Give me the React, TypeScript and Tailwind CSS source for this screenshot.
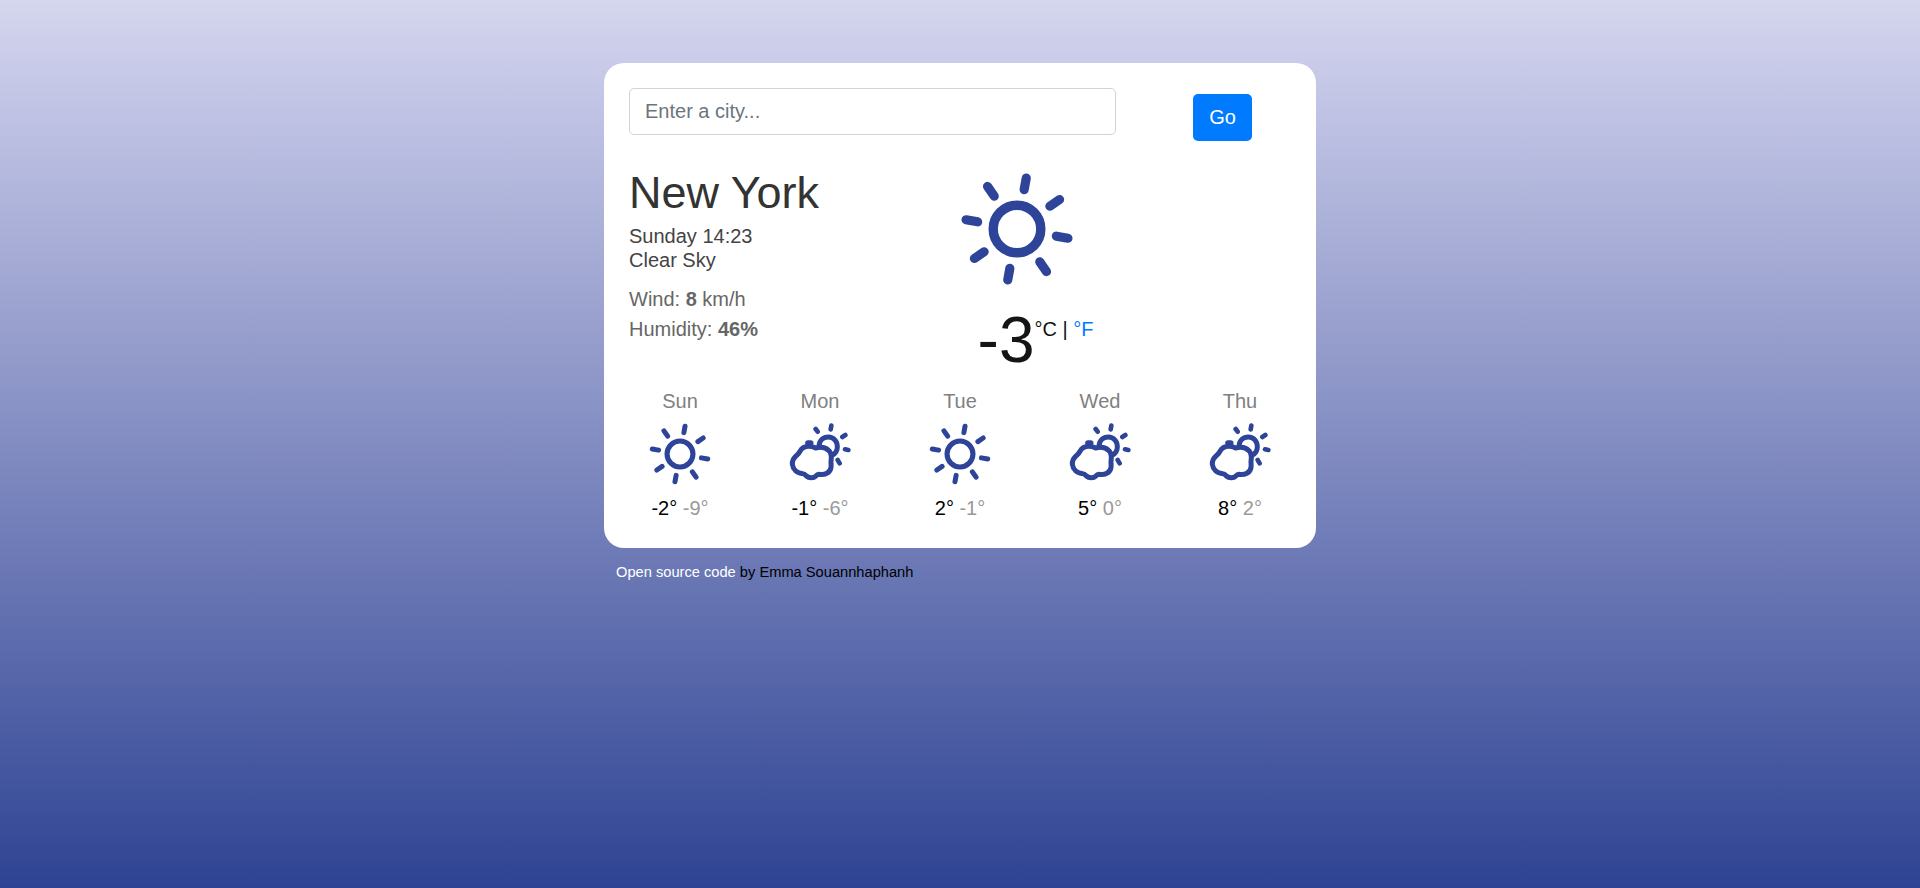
type Condition = "clear" | "partly";

type Day = { name: string; condition: Condition; high: number; low: number };

const forecast: Day[] = [
  { name: "Sun", condition: "clear", high: -2, low: -9 },
  { name: "Mon", condition: "partly", high: -1, low: -6 },
  { name: "Tue", condition: "clear", high: 2, low: -1 },
  { name: "Wed", condition: "partly", high: 5, low: 0 },
  { name: "Thu", condition: "partly", high: 8, low: 2 },
];

const rays = [10.3, 55.3, 100.3, 145.3, 190.3, 235.3, 280.3, 325.3];

function SunIcon({ className }: { className: string }) {
  return (
    <svg viewBox="-57 -57 114 114" className={className} fill="none" stroke="#2e4499" strokeLinecap="round">
      <circle r="23.8" strokeWidth="9.4" />
      {rays.map((angle) => (
        <path key={angle} d="M0 -40V-51.8" strokeWidth="9.2" transform={`rotate(${angle})`} />
      ))}
    </svg>
  );
}

function PartlyCloudyIcon({ className }: { className: string }) {
  return (
    <svg
      viewBox="27 24 186 186"
      className={className}
      fill="none"
      stroke="#2e4499"
      strokeWidth="15"
      strokeLinecap="round"
      strokeLinejoin="round"
    >
      <path d="M117 93C118 76 130 66 145 66C161 66 172 79 172 95C172 107 166 116 156 121" />
      <path d="M107 42L113 50M154 32L152 43M187 66L196 60M195 103L205 105M173 135L179 145" strokeWidth="14" />
      <path d="M84 84H92" strokeWidth="17" />
      <path d="M86 94C74 94 65 100 60 109C57 116 52 119 47 124C40 131 36 139 37 148C39 163 50 175 69 176C75 176 76 180 79 183C87 190 101 190 107 184C110 180 112 178 117 178C134 181 151 174 153 157C154 150 153 146 153 140C155 128 154 115 147 107C137 97 121 95 107 99C101 96 94 94 86 94Z" />
    </svg>
  );
}

export default function App() {
  return (
    <div className="min-h-screen bg-[linear-gradient(to_top,rgb(46,67,147)_0%,rgb(147,155,203)_60%,rgb(201,203,233)_93%,rgb(213,215,237)_100%)] pt-[63px] font-['Liberation_Sans',Arial,sans-serif] text-[20px] leading-[30px] text-black">
      <main className="mx-auto w-[712px]">
        <section className="h-[485px] rounded-[20px] bg-white p-[25px]">
          <form className="flex items-start" onSubmit={(e) => e.preventDefault()}>
            <input
              type="text"
              placeholder="Enter a city..."
              className="h-[47px] w-[487px] rounded-[5px] border border-[#ced4da] bg-white px-[15px] placeholder:text-[#6c757d] focus:outline-none"
            />
            <button
              type="submit"
              className="mt-[6px] ml-[77px] h-[47px] w-[59px] rounded-[5px] bg-[#007bff] pb-[2px] text-white"
            >
              Go
            </button>
          </form>

          <div className="mt-[21px] flex h-[209px]">
            <div className="w-[330.6px] pt-[4px]">
              <h1 className="text-[45px] leading-[54px] text-[#333]">New York</h1>
              <h2 className="mt-[4px] leading-[24px] text-[#444]">
                Sunday 14:23
                <br />
                Clear Sky
              </h2>
              <ul className="mt-[12px] text-[#666]">
                <li>
                  Wind: <strong>8</strong> km/h
                </li>
                <li>
                  Humidity: <strong>46%</strong>
                </li>
              </ul>
            </div>
            <div>
              <SunIcon className="mt-[9.5px] h-[114px] w-[114px]" />
              <div className="mt-[16.5px] ml-[18px] flex items-start">
                <strong className="text-[64px] leading-[76px] font-normal text-[#151515]">-3</strong>
                <span className="mt-[12px] text-[#111]">
                  °C | <a href="#" className="text-[#007bff]">°F</a>
                </span>
              </div>
            </div>
          </div>

          <div className="-mx-[19px] mt-[15px] grid grid-cols-5 text-center">
            {forecast.map((day) => (
              <div key={day.name} className="flex flex-col items-center">
                <div className="text-[#808080]">{day.name}</div>
                {day.condition === "clear" ? (
                  <SunIcon className="mt-[7px] h-[62px] w-[62px]" />
                ) : (
                  <PartlyCloudyIcon className="mt-[7px] h-[62px] w-[62px]" />
                )}
                <div className="mt-[8px]">
                  {day.high}° <span className="text-[#999]">{day.low}°</span>
                </div>
              </div>
            ))}
          </div>
        </section>

        <footer className="mt-[12px] ml-[12px] text-[14.667px] leading-[24px]">
          <a href="#" className="text-white">Open source code</a> by Emma Souannhaphanh
        </footer>
      </main>
    </div>
  );
}
